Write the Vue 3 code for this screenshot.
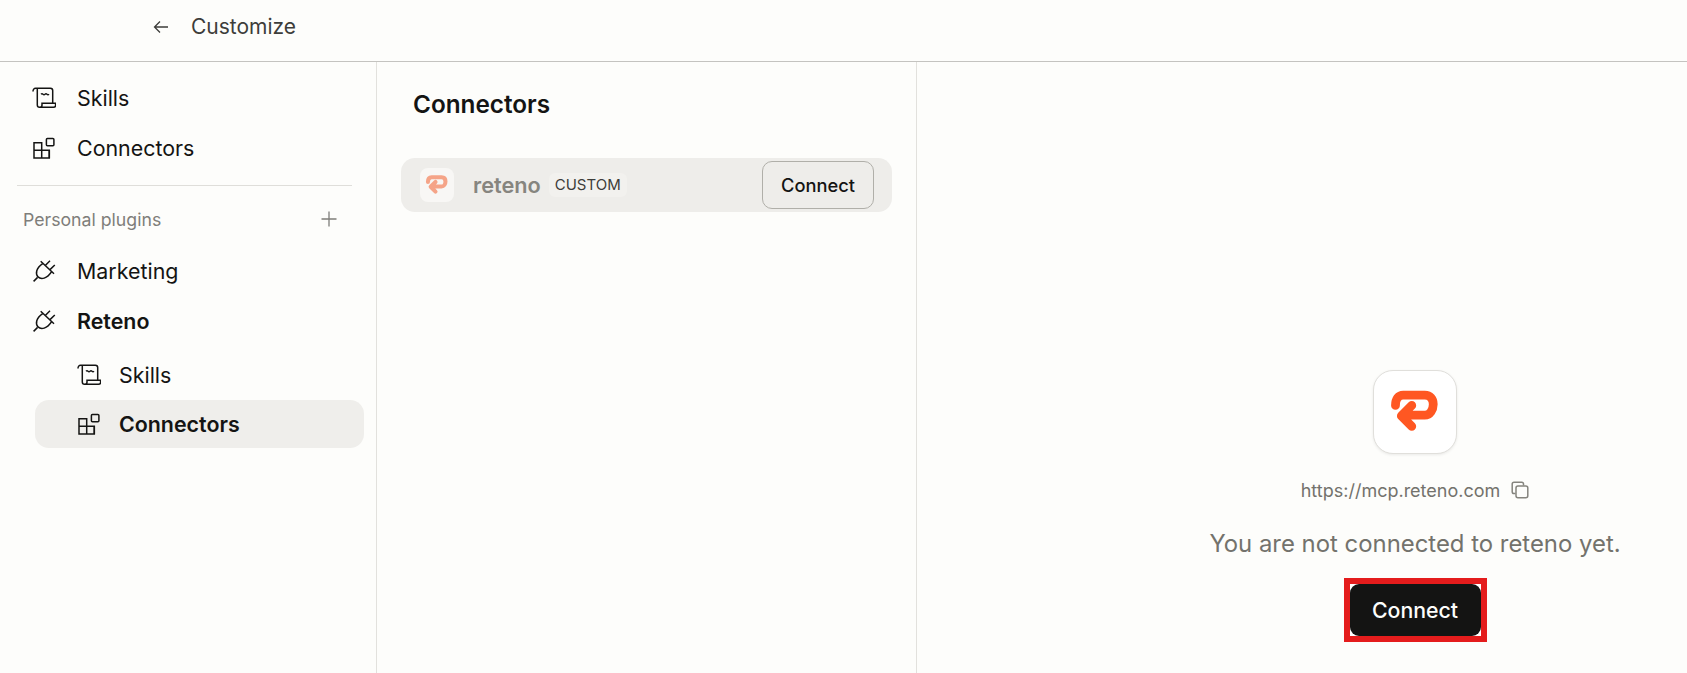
<script setup>
const topItems = [
  { label: 'Skills', icon: 'scroll' },
  { label: 'Connectors', icon: 'blocks' },
]

const pluginItems = [
  { label: 'Marketing', icon: 'plug' },
  { label: 'Reteno', icon: 'plug', bold: true },
]

const subItems = [
  { label: 'Skills', icon: 'scroll' },
  { label: 'Connectors', icon: 'blocks', bold: true, active: true },
]
</script>

<template>
  <svg class="defs" aria-hidden="true">
    <symbol id="scroll" viewBox="0 0 24 24">
      <path d="M1 5.5C1 3.4 2 2.3 3.6 2.3H18.4Q20.7 2.3 20.7 4.6V17.3" />
      <path d="M5.3 3V19Q5.3 21.3 7.6 21.3H21.4Q23.6 21.3 23.6 19.4V17.3H10V19.2Q10 21.3 7.6 21.3" />
      <path d="M9 8.2q1-1 2 0t2 0t2 0t2 0" />
    </symbol>
    <symbol id="blocks" viewBox="0 0 24 24">
      <path d="M2 6.7H9.7V22H2ZM2 14.3H17.3V22H9.7" />
      <path d="M17.3 14.3V22" />
      <rect x="14.4" y="2.4" width="7.5" height="7.4" rx="1" />
    </symbol>
    <symbol id="plug" viewBox="0 0 24 24">
      <path d="M8.7 2.2L22 14.7" />
      <path d="M13.5 6.2L18 1.8M18 10.6L22.8 6" />
      <path d="M10.7 4.6C4 9 3.2 15 6 17.9C9 20.8 15 20 19.6 12.7" />
      <path d="M5.6 18.4L1.6 22.4" />
    </symbol>
    <symbol id="reteno" viewBox="0 0 84 84">
      <path d="M22 35.3C22 29 25 24.7 30 24.7H52C57.5 24.7 60.7 28.5 60.7 34S57.5 45.3 52 45.3H29M38.7 35.3L28 46L38.7 56.7" />
    </symbol>
  </svg>

  <div class="page">
    <header class="topbar">
      <svg class="back" viewBox="0 0 18 18">
        <path d="M16 9H2.5M8 3.5L2.5 9L8 14.5" />
      </svg>
      <span class="title">Customize</span>
    </header>

    <div class="columns">
      <aside class="sidebar">
        <a v-for="item in topItems" :key="item.label" class="nav-item">
          <svg class="icon"><use :href="'#' + item.icon" /></svg>
          {{ item.label }}
        </a>

        <hr class="divider" />

        <div class="section-head">
          <span>Personal plugins</span>
          <svg class="plus" viewBox="0 0 18 18"><path d="M9 1.5V16.5M1.5 9H16.5" /></svg>
        </div>

        <a
          v-for="item in pluginItems"
          :key="item.label"
          class="nav-item"
          :class="{ bold: item.bold }"
        >
          <svg class="icon"><use :href="'#' + item.icon" /></svg>
          {{ item.label }}
        </a>

        <div class="sub-list">
          <a
            v-for="item in subItems"
            :key="item.label"
            class="sub-item"
            :class="{ bold: item.bold, active: item.active }"
          >
            <svg class="icon"><use :href="'#' + item.icon" /></svg>
            {{ item.label }}
          </a>
        </div>
      </aside>

      <section class="connectors">
        <h2>Connectors</h2>
        <div class="connector-row">
          <span class="row-logo"><svg><use href="#reteno" /></svg></span>
          <span class="row-name">reteno</span>
          <span class="badge">CUSTOM</span>
          <button class="row-connect">Connect</button>
        </div>
      </section>

      <section class="detail">
        <div class="detail-logo"><svg><use href="#reteno" /></svg></div>
        <div class="url">
          https://mcp.reteno.com
          <svg class="copy" viewBox="0 0 18 18">
            <path d="M4.5 12.5H3Q1.2 12.5 1.2 10.7V3Q1.2 1.2 3 1.2H10.7Q12.5 1.2 12.5 3V4.5" />
            <rect x="5" y="5" width="11.8" height="11.8" rx="2" />
          </svg>
        </div>
        <p class="message">You are not connected to reteno yet.</p>
        <div class="highlight">
          <button class="connect">Connect</button>
        </div>
      </section>
    </div>
  </div>
</template>

<style>
html,
body {
  margin: 0;
  background: #fdfdfb;
  overflow: hidden;
}
</style>

<style scoped>
.defs {
  position: absolute;
  width: 0;
  height: 0;
}

.page {
  height: 673px;
  display: flex;
  flex-direction: column;
  background: #fdfdfb;
  color: #141413;
  font-family: Inter, "Liberation Sans", sans-serif;
}

.topbar {
  flex: none;
  height: 53px;
  display: flex;
  align-items: center;
  padding: 0 0 8px 152px;
  border-bottom: 1px solid #c4c3c0;
  box-sizing: content-box;
}

.back {
  width: 18px;
  height: 18px;
  fill: none;
  stroke: #3d3d3a;
  stroke-width: 1.3;
}

.title {
  margin-left: 21px;
  font-size: 21px;
  color: #3d3d3a;
}

.columns {
  flex: 1;
  display: flex;
  min-height: 0;
}

.sidebar {
  width: 377px;
  box-sizing: border-box;
  padding: 11px 12px 0 17px;
  border-right: 1px solid #e2e1dd;
}

.nav-item {
  height: 50px;
  display: flex;
  align-items: center;
  gap: 21px;
  padding-left: 15px;
  font-size: 21.4px;
}

.icon {
  flex: none;
  width: 24px;
  height: 24px;
  fill: none;
  stroke: #141413;
  stroke-width: 1.5;
}

.bold {
  font-weight: 600;
}

.divider {
  margin: 12px 12px 0 0;
  border: none;
  border-top: 1px solid #dfdeda;
}

.section-head {
  height: 54px;
  margin-top: 6px;
  display: flex;
  align-items: center;
  justify-content: space-between;
  padding: 0 26px 0 6px;
  font-size: 17.7px;
  color: #7f7e7a;
}

.plus {
  width: 18px;
  height: 18px;
  fill: none;
  stroke: #7f7e7a;
  stroke-width: 1.3;
}

.sub-list {
  display: flex;
  flex-direction: column;
  gap: 1px;
  margin: 5px 0 0 18px;
}

.sub-item {
  height: 48px;
  display: flex;
  align-items: center;
  gap: 18px;
  padding-left: 42px;
  border-radius: 14px;
  font-size: 21.4px;
}

.sub-item.active {
  background: #efeeeb;
}

.connectors {
  width: 540px;
  box-sizing: border-box;
  padding: 0 24px;
  border-right: 1px solid #e2e1dd;
}

h2 {
  margin: 27px 0 0 12px;
  font-size: 24.3px;
  line-height: 30px;
  font-weight: 600;
}

.connector-row {
  height: 54px;
  margin-top: 39px;
  display: flex;
  align-items: center;
  padding: 0 18px 0 19px;
  border-radius: 14px;
  background: #eeedea;
}

.row-logo {
  width: 34px;
  height: 34px;
  border-radius: 8px;
  background: #f8f7f5;
}

.row-logo svg {
  display: block;
  width: 38px;
  height: 38px;
  margin: -2px;
  fill: none;
  stroke: #f5a488;
  stroke-width: 9;
  stroke-linecap: round;
  stroke-linejoin: round;
}

.row-name {
  margin-left: 19px;
  font-size: 21.7px;
  font-weight: 600;
  color: #86857f;
}

.badge {
  margin-left: 8px;
  padding: 0 6px;
  height: 24px;
  line-height: 24px;
  border-radius: 6px;
  background: #f2f1ee;
  font-size: 15px;
  color: #3d3d3a;
}

.row-connect {
  margin-left: auto;
  width: 112px;
  height: 48px;
  border: 1px solid #b0afa9;
  border-radius: 10px;
  background: transparent;
  font: inherit;
  font-size: 18.3px;
  font-weight: 500;
  color: #141413;
}

.detail {
  flex: 1;
  display: flex;
  flex-direction: column;
  align-items: center;
  padding: 308px 0 0 226px;
}

.detail-logo {
  width: 84px;
  height: 84px;
  box-sizing: border-box;
  border: 1px solid #e0dfdb;
  border-radius: 20px;
  background: #fff;
  box-shadow: 0 1px 3px rgba(0, 0, 0, 0.08);
}

.detail-logo svg {
  display: block;
  width: 82px;
  height: 82px;
  fill: none;
  stroke: #ff5722;
  stroke-width: 9;
  stroke-linecap: round;
  stroke-linejoin: round;
}

.url {
  margin-top: 24px;
  height: 24px;
  display: flex;
  align-items: center;
  gap: 11px;
  font-size: 18px;
  color: #73726c;
}

.copy {
  width: 18px;
  height: 18px;
  fill: none;
  stroke: #85847e;
  stroke-width: 1.5;
}

.message {
  margin: 27px 0 0;
  font-size: 23.9px;
  line-height: 30px;
  color: #73726c;
}

.highlight {
  margin-top: 19px;
  border: 6px solid #e41c1c;
  background: #fff;
  display: flex;
}

.connect {
  width: 131px;
  height: 52px;
  border: none;
  border-radius: 9px;
  background: #141413;
  color: #fdfdfb;
  font: inherit;
  font-size: 21.3px;
  font-weight: 500;
}
</style>
